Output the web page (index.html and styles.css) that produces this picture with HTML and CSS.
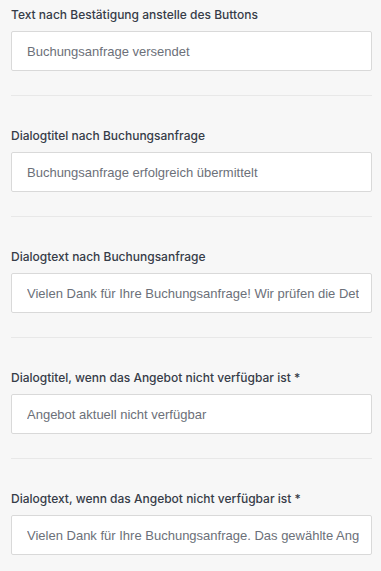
FILE: index.html
```html
<!DOCTYPE html>
<html lang="de">
<head>
  <meta charset="UTF-8">
  <meta name="viewport" content="width=device-width, initial-scale=1.0">
  <title>Buchungsanfrage Texte</title>
  <link rel="stylesheet" href="styles.css">
</head>
<body>
  <main class="settings">
    <div class="field">
      <label for="confirm-text">Text nach Bestätigung anstelle des Buttons</label>
      <input id="confirm-text" type="text" value="Buchungsanfrage versendet">
    </div>
    <hr class="divider">

    <div class="field">
      <label for="dialog-title">Dialogtitel nach Buchungsanfrage</label>
      <input id="dialog-title" type="text" value="Buchungsanfrage erfolgreich übermittelt">
    </div>
    <hr class="divider">

    <div class="field">
      <label for="dialog-text">Dialogtext nach Buchungsanfrage</label>
      <input id="dialog-text" type="text" value="Vielen Dank für Ihre Buchungsanfrage! Wir prüfen die Details und melden uns zeitnah bei Ihnen.">
    </div>
    <hr class="divider">

    <div class="field">
      <label for="na-title">Dialogtitel, wenn das Angebot nicht verfügbar ist *</label>
      <input id="na-title" type="text" value="Angebot aktuell nicht verfügbar">
    </div>
    <hr class="divider">

    <div class="field">
      <label for="na-text">Dialogtext, wenn das Angebot nicht verfügbar ist *</label>
      <input id="na-text" type="text" value="Vielen Dank für Ihre Buchungsanfrage. Das gewählte Angebot ist leider nicht mehr verfügbar.">
    </div>
  </main>
</body>
</html>
```

FILE: styles.css
```css
/* General Styles */
body {
  font-family: Inter, "Liberation Sans", sans-serif;
  background-color: #f7f7f7;
  margin: 0;
  padding: 0;
}

.settings {
  padding: 6px 9px 0 11px;
}

.field label {
  display: block;
  font-size: 12px;
  line-height: 18px;
  font-weight: 500;
  color: #363c48;
  margin-bottom: 7px;
}

.field input {
  display: block;
  box-sizing: border-box;
  width: 100%;
  height: 40px;
  padding: 0 12px 0 15px;
  font-family: "Liberation Sans", Arial, sans-serif;
  font-size: 13px;
  color: #6c7079;
  background-color: #fff;
  border: 1px solid #d9d9d9;
  border-radius: 2px;
  outline: none;
}

.divider {
  border: none;
  border-top: 1px solid #e8e8e8;
  margin: 24px 0 31px;
}
```
